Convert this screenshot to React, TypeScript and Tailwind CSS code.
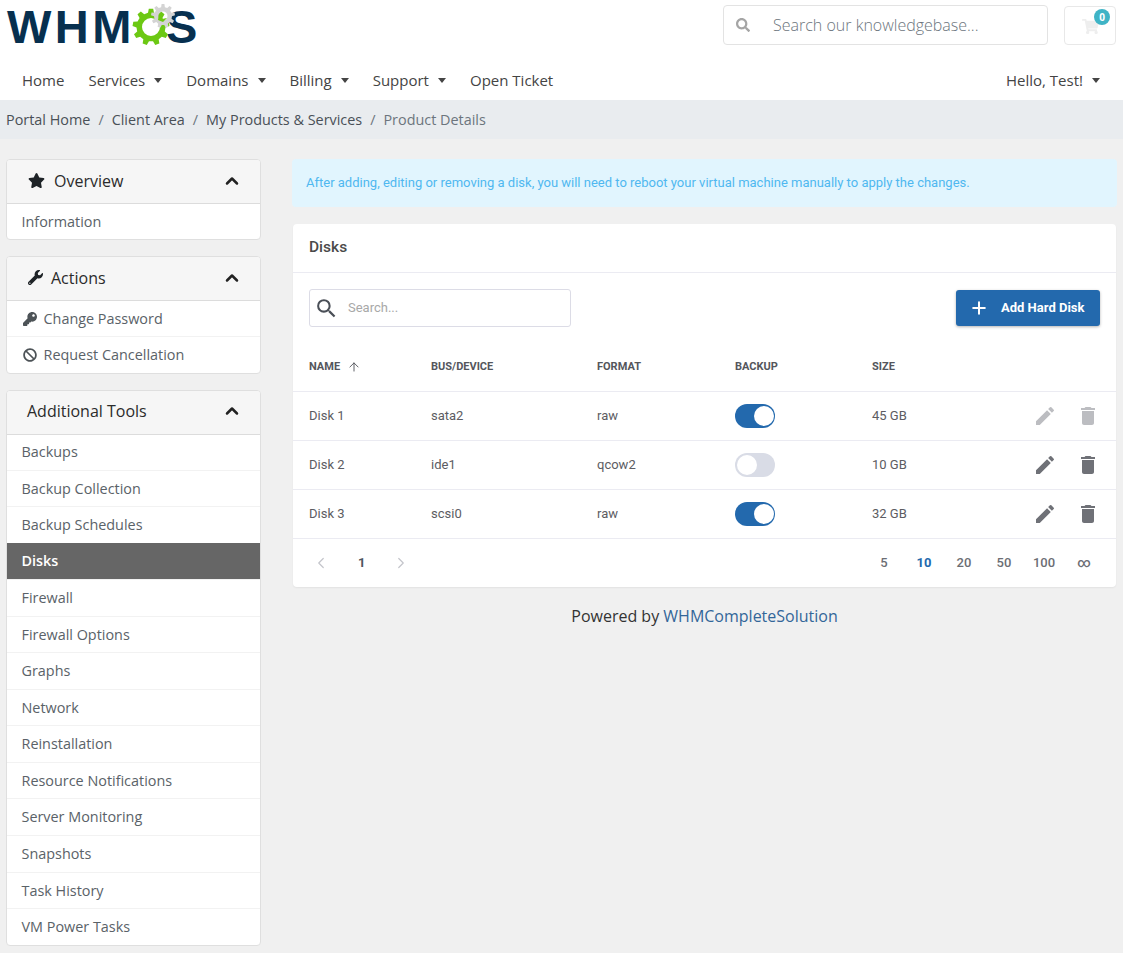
import React from 'react';
import { ArrowUp, ChevronLeft, ChevronRight, ChevronUp, Plus } from 'lucide-react';
import { FaBan, FaKey, FaSearch, FaShoppingCart, FaStar, FaWrench } from 'react-icons/fa';
import { MdDelete, MdEdit, MdSearch } from 'react-icons/md';

const gearPath = (cx: number, cy: number, outer: number, inner: number, hole: number, teeth: number) => {
  const step = (Math.PI * 2) / teeth;
  const pts: string[] = [];
  for (let i = 0; i < teeth; i++) {
    const a = i * step - Math.PI / 2;
    const corners: [number, number][] = [
      [inner, a - step * 0.3],
      [outer, a - step * 0.17],
      [outer, a + step * 0.17],
      [inner, a + step * 0.3],
    ];
    corners.forEach(([r, t]) => {
      pts.push(`${(cx + r * Math.cos(t)).toFixed(2)} ${(cy + r * Math.sin(t)).toFixed(2)}`);
    });
  }
  const ring = `M${cx - hole} ${cy}a${hole} ${hole} 0 1 0 ${hole * 2} 0a${hole} ${hole} 0 1 0 ${-hole * 2} 0Z`;
  return `M${pts.join('L')}Z${ring}`;
};

const Logo = () => (
  <div className="relative h-[54px] w-[200px]">
    <span className="absolute left-[7px] top-0 text-[47px] leading-[54px] font-bold text-[#07304f] [font-family:'Liberation_Sans',sans-serif] tracking-[3.5px]">
      WHM
    </span>
    <span className="absolute left-[166px] top-0 text-[47px] leading-[54px] font-bold text-[#07304f] [font-family:'Liberation_Sans',sans-serif]">
      S
    </span>
    <svg className="absolute left-0 top-0" width="200" height="50" viewBox="0 0 200 50">
      <circle cx="151" cy="27" r="14" fill="#ffffff" />
      <path d={gearPath(151, 27, 18.5, 14.5, 9, 9)} fill="#6cc813" fillRule="evenodd" />
      <path d={gearPath(163, 16, 12, 9, 4.5, 9)} fill="#d4d4d4" fillRule="evenodd" />
      <path d="M159 14 L162 19 L167 18 L163 22 L158 20 Z" fill="#6cc813" />
    </svg>
  </div>
);

const Caret = () => (
  <span className="ml-[9px] inline-block h-0 w-0 border-x-[4.5px] border-t-[5px] border-x-transparent border-t-[#444]" />
);

const navItems: { label: string; caret?: boolean }[] = [
  { label: 'Home' },
  { label: 'Services', caret: true },
  { label: 'Domains', caret: true },
  { label: 'Billing', caret: true },
  { label: 'Support', caret: true },
  { label: 'Open Ticket' },
];

const crumbs = ['Portal Home', 'Client Area', 'My Products & Services'];

const Header = () => (
  <header className="bg-white">
    <div className="flex h-[62px] items-start justify-between pr-[7px]">
      <Logo />
      <div className="flex items-start pt-[5px]">
        <div className="flex h-[40px] w-[325px] items-center rounded-[4px] border border-[#e3e3e3] pl-[12px]">
          <FaSearch className="h-[14px] w-[14px] text-[#a5a5a5]" />
          <span className="ml-[23px] text-[16px] font-light text-[#6c757d]">Search our knowledgebase...</span>
        </div>
        <div className="relative ml-[16px] mt-[1px] h-[39px] w-[52px] rounded-[4px] border border-[#e8e8e8]">
          <FaShoppingCart className="absolute left-[17px] top-[11px] h-[17px] w-[17px] text-[#eeeeee]" />
          <span className="absolute left-[29px] top-[2px] flex h-[16px] w-[16px] items-center justify-center rounded-full bg-[#3fb4c6] text-[10px] font-bold text-white">
            0
          </span>
        </div>
      </div>
    </div>
    <nav className="flex h-[38px] items-center justify-between pb-[1px] pl-[22px] pr-[23px] text-[15px] text-[#444]">
      <div className="flex gap-[24px]">
        {navItems.map((n) => (
          <span key={n.label} className="flex items-center">
            {n.label}
            {n.caret && <Caret />}
          </span>
        ))}
      </div>
      <span className="flex items-center">
        Hello, Test!
        <Caret />
      </span>
    </nav>
  </header>
);

const Breadcrumb = () => (
  <div className="flex h-[39px] items-center bg-[#e9ecef] pl-[6px] text-[14.4px] text-[#495057]">
    {crumbs.map((c) => (
      <span key={c} className="flex">
        {c}
        <span className="px-[8px] text-[#6c757d]">/</span>
      </span>
    ))}
    <span className="text-[#6c757d]">Product Details</span>
  </div>
);

type PanelItem = { label: string; icon?: React.ReactNode; active?: boolean };

const Panel = ({ title, icon, items }: { title: string; icon?: React.ReactNode; items: PanelItem[] }) => (
  <section className="overflow-hidden rounded-[4px] border border-[#dfdfdf] bg-white">
    <div className="flex h-[44px] items-center justify-between border-b border-[#dcdcdc] bg-[#f6f6f6] pb-[2px] pl-[20px] pr-[18px]">
      <h3 className="flex items-center text-[16px] text-[#2b2b2b]">
        {icon}
        {title}
      </h3>
      <ChevronUp className="h-[20px] w-[20px] text-[#222]" strokeWidth={3} />
    </div>
    {items.map((it, i) => (
      <div
        key={it.label}
        className={
          it.active
            ? 'flex h-[36.55px] items-center bg-[#666666] pl-[14.5px] text-[14.4px] font-semibold text-white'
            : i === 0
              ? 'flex h-[35px] items-center pl-[14.5px] text-[14.4px] text-[#5a6268]'
              : 'flex h-[36.55px] items-center border-t border-[#f2f2f2] pl-[14.5px] text-[14.4px] text-[#5a6268]'
        }
      >
        {it.icon}
        {it.label}
      </div>
    ))}
  </section>
);

const tools = [
  'Backups',
  'Backup Collection',
  'Backup Schedules',
  'Disks',
  'Firewall',
  'Firewall Options',
  'Graphs',
  'Network',
  'Reinstallation',
  'Resource Notifications',
  'Server Monitoring',
  'Snapshots',
  'Task History',
  'VM Power Tasks',
];

const Sidebar = () => (
  <aside className="flex w-[255px] shrink-0 flex-col gap-[16px]">
    <Panel
      title="Overview"
      icon={<FaStar className="ml-[1px] mr-[9px] h-[17px] w-[17px] text-[#1e2327]" />}
      items={[{ label: 'Information' }]}
    />
    <Panel
      title="Actions"
      icon={<FaWrench className="ml-[1px] mr-[8px] h-[15px] w-[15px] text-[#1e2327]" />}
      items={[
        { label: 'Change Password', icon: <FaKey className="ml-[1px] mr-[7px] h-[14px] w-[14px] text-[#4d5357]" /> },
        { label: 'Request Cancellation', icon: <FaBan className="ml-[1px] mr-[7px] h-[14px] w-[14px] text-[#4d5357]" /> },
      ]}
    />
    <Panel title="Additional Tools" items={tools.map((t) => ({ label: t, active: t === 'Disks' }))} />
  </aside>
);

const Toggle = ({ on }: { on: boolean }) => (
  <span
    className={
      on
        ? 'flex h-[24px] w-[40px] items-center justify-end rounded-full bg-[#2369ad] pr-[1px]'
        : 'flex h-[24px] w-[40px] items-center rounded-full bg-[#d9dce6] pl-[2px]'
    }
  >
    <span className="h-[20px] w-[20px] rounded-full bg-white" />
  </span>
);

const disks = [
  { name: 'Disk 1', bus: 'sata2', format: 'raw', backup: true, size: '45 GB', muted: true },
  { name: 'Disk 2', bus: 'ide1', format: 'qcow2', backup: false, size: '10 GB', muted: false },
  { name: 'Disk 3', bus: 'scsi0', format: 'raw', backup: true, size: '32 GB', muted: false },
];

const rowGrid = 'grid grid-cols-[122px_166px_138px_137px_1fr] items-center pl-[16px]';

const DisksCard = () => (
  <div className="mx-[1px] rounded-[4px] bg-white shadow-[0_1px_2px_rgba(0,0,0,0.06)]">
    <div className="flex h-[49px] items-center border-b border-[#ebebf2] px-[16px] text-[15.5px] font-medium text-[#4a4a4a]">
      Disks
    </div>
    <div className="flex items-center justify-between px-[16px] pt-[16px]">
      <div className="flex h-[38px] w-[262px] items-center rounded-[3px] border border-[#dcdce6] pl-[4px]">
        <MdSearch className="h-[25px] w-[25px] text-[#4a4f57]" />
        <span className="ml-[9px] text-[13px] text-[#a8a8a8]">Search...</span>
      </div>
      <button className="flex h-[36px] w-[144px] items-center rounded-[3px] bg-[#2369ad] pl-[13px] text-[13px] font-bold text-white shadow-[0_1px_3px_rgba(0,0,0,0.3)]">
        <Plus className="mr-[12px] h-[20px] w-[20px]" strokeWidth={2.4} />
        Add Hard Disk
      </button>
    </div>
    <div className={`${rowGrid} mt-[16px] h-[48px] text-[11px] font-bold text-[#54565c]`}>
      <span className="flex items-center">
        NAME
        <ArrowUp className="ml-[7px] h-[14px] w-[14px]" strokeWidth={1.6} />
      </span>
      <span>BUS/DEVICE</span>
      <span>FORMAT</span>
      <span>BACKUP</span>
      <span>SIZE</span>
    </div>
    {disks.map((d) => (
      <div key={d.name} className={`${rowGrid} h-[49px] border-t border-[#ebebf2] text-[13px] text-[#5c5c62]`}>
        <span>{d.name}</span>
        <span>{d.bus}</span>
        <span>{d.format}</span>
        <Toggle on={d.backup} />
        <div className="flex items-center justify-between pr-[16px]">
          <span>{d.size}</span>
          <span className={d.muted ? 'flex items-center gap-[19px] text-[#bcbdc1]' : 'flex items-center gap-[19px] text-[#6f7177]'}>
            <MdEdit className="h-[24px] w-[24px]" />
            <MdDelete className="h-[24px] w-[24px]" />
          </span>
        </div>
      </div>
    ))}
    <div className="flex h-[49px] items-center justify-between border-t border-[#ebebf2] pl-[19px] pr-[12px] text-[13px] font-medium text-[#6c6e74]">
      <div className="flex items-center">
        <ChevronLeft className="h-[18px] w-[18px] text-[#c4c5cb]" strokeWidth={1.6} />
        <span className="ml-[28px] font-bold text-[#4d5560]">1</span>
        <ChevronRight className="ml-[27px] h-[18px] w-[18px] text-[#c4c5cb]" strokeWidth={1.6} />
      </div>
      <div className="flex items-center">
        {['5', '10', '20', '50', '100', '∞'].map((p) => (
          <span key={p} className={p === '10' ? 'w-[40px] text-center font-bold text-[#2369ad]' : 'w-[40px] text-center'}>
            {p}
          </span>
        ))}
      </div>
    </div>
  </div>
);

export default function App() {
  return (
    <div className="min-h-[953px] bg-[#f0f0f0] [font-family:'Open_Sans',sans-serif]">
      <Header />
      <Breadcrumb />
      <main className="flex gap-[31px] pb-[6px] pl-[6px] pr-[6px] pt-[20px]">
        <Sidebar />
        <div className="min-w-0 flex-1 [font-family:Roboto,sans-serif]">
          <div className="flex h-[48px] items-center rounded-[4px] bg-[#e1f5fe] pl-[14px] text-[13px] text-[#4fb8f0]">
            After adding, editing or removing a disk, you will need to reboot your virtual machine manually to apply the changes.
          </div>
          <div className="mt-[17px]">
            <DisksCard />
          </div>
          <p className="mt-[18px] text-center text-[16px] leading-[22px] text-[#333] [font-family:'Open_Sans',sans-serif]">
            Powered by <span className="text-[#336699]">WHMCompleteSolution</span>
          </p>
        </div>
      </main>
    </div>
  );
}
